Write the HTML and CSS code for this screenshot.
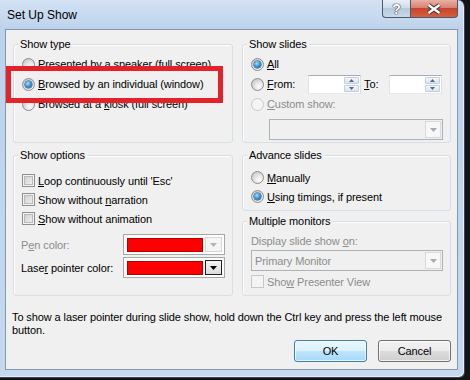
FILE: index.html
```html
<!DOCTYPE html>
<html lang="en">
<head>
    <meta charset="UTF-8">
    <title>Set Up Show</title>
    <link rel="stylesheet" href="styles.css">
</head>
<body>
    <div class="window">
        <div class="titlebar">
            <span class="title">Set Up Show</span>
            <div class="caption-buttons">
                <span class="cap-btn help">?</span>
                <span class="cap-btn close">
                    <svg width="14" height="12" viewBox="0 0 14 12"><path d="M1.5 2L12.5 10M12.5 2L1.5 10" stroke="#3b3b3b" stroke-width="4.4"/><path d="M1.5 2L12.5 10M12.5 2L1.5 10" stroke="#fff" stroke-width="2.2"/></svg>
                </span>
            </div>
        </div>

        <div class="client">
            <div class="panels">
                <div class="group">
                    <div class="legend">Show type</div>
                    <div class="opt"><span class="radio"></span><span><u>P</u>resented by a speaker (full screen)</span></div>
                    <div class="opt"><span class="radio on"></span><span><u>B</u>rowsed by an individual (window)</span></div>
                    <div class="opt"><span class="radio"></span><span>Browsed at a <u>k</u>iosk (full screen)</span></div>
                </div>

                <div class="group">
                    <div class="legend">Show slides</div>
                    <div class="opt"><span class="radio on"></span><span><u>A</u>ll</span></div>
                    <div class="opt">
                        <span class="radio"></span>
                        <span class="lbl-from"><u>F</u>rom:</span>
                        <span class="spin">
                            <span class="spin-btns">
                                <span><svg width="5" height="3" viewBox="0 0 5 3"><path d="M0 3h5L2.5 0z" fill="#4d6a96"/></svg></span>
                                <span><svg width="5" height="3" viewBox="0 0 5 3"><path d="M0 0h5L2.5 3z" fill="#4d6a96"/></svg></span>
                            </span>
                        </span>
                        <span class="lbl-to"><u>T</u>o:</span>
                        <span class="spin">
                            <span class="spin-btns">
                                <span><svg width="5" height="3" viewBox="0 0 5 3"><path d="M0 3h5L2.5 0z" fill="#4d6a96"/></svg></span>
                                <span><svg width="5" height="3" viewBox="0 0 5 3"><path d="M0 0h5L2.5 3z" fill="#4d6a96"/></svg></span>
                            </span>
                        </span>
                    </div>
                    <div class="opt dis"><span class="radio off"></span><span><u>C</u>ustom show:</span></div>
                    <div class="combo custom">
                        <span class="combo-value"></span>
                        <span class="combo-arrow"><svg width="7" height="4" viewBox="0 0 7 4"><path d="M0 0h7L3.5 4z" fill="#a9a9a9"/></svg></span>
                    </div>
                </div>

                <div class="group options">
                    <div class="legend">Show options</div>
                    <div class="opt"><span class="check"></span><span><u>L</u>oop continuously until 'Esc'</span></div>
                    <div class="opt"><span class="check"></span><span>Show without <u>n</u>arration</span></div>
                    <div class="opt"><span class="check"></span><span><u>S</u>how without animation</span></div>
                    <div class="colorrow first">
                        <span class="field-label dis">P<u>e</u>n color:</span>
                        <span class="colorbox">
                            <span class="swatch"></span>
                            <span class="drop"><svg width="7" height="4" viewBox="0 0 7 4"><path d="M0 0h7L3.5 4z" fill="#b4b4b4"/></svg></span>
                        </span>
                    </div>
                    <div class="colorrow">
                        <span class="field-label">Lase<u>r</u> pointer color:</span>
                        <span class="colorbox">
                            <span class="swatch"></span>
                            <span class="drop active"><svg width="7" height="4" viewBox="0 0 7 4"><path d="M0 0h7L3.5 4z" fill="#000"/></svg></span>
                        </span>
                    </div>
                </div>

                <div class="stack">
                    <div class="group advance">
                        <div class="legend">Advance slides</div>
                        <div class="opt"><span class="radio"></span><span><u>M</u>anually</span></div>
                        <div class="opt"><span class="radio on"></span><span><u>U</u>sing timings, if present</span></div>
                    </div>
                    <div class="group monitors">
                        <div class="legend">Multiple monitors</div>
                        <div class="caption dis">Display slide show <u>o</u>n:</div>
                        <div class="combo">
                            <span class="combo-value">Primary Monitor</span>
                            <span class="combo-arrow"><svg width="7" height="4" viewBox="0 0 7 4"><path d="M0 0h7L3.5 4z" fill="#a9a9a9"/></svg></span>
                        </div>
                        <div class="opt dis"><span class="check off"></span><span>Sho<u>w</u> Presenter View</span></div>
                    </div>
                </div>
            </div>

            <p class="hint">To show a laser pointer during slide show, hold down the Ctrl key and press the left mouse<br>button.</p>

            <div class="actions">
                <button class="btn default">OK</button>
                <button class="btn">Cancel</button>
            </div>
        </div>

        <div class="highlight"></div>
    </div>
</body>
</html>
```

FILE: styles.css
```css
body {
    margin: 0;
    background: #141414;
    font-family: "Liberation Sans", Arial, sans-serif;
    font-size: 11px;
    letter-spacing: -0.1px;
    color: #000;
}
.window {
    position: relative;
    width: 465px;
    height: 378px;
    box-sizing: border-box;
    display: flex;
    flex-direction: column;
    background: linear-gradient(#d3e2f4, #bdd2eb 30px, #c5d8ee);
    border-right: 1px solid #3a4656;
    border-bottom: 1px solid #3a4656;
    border-radius: 0 7px 6px 0;
    box-shadow: inset -1px -1px 0 #e4eef9;
}
.titlebar {
    flex: none;
    height: 29px;
    display: flex;
    align-items: flex-start;
}
.title {
    font-size: 12px;
    line-height: 14px;
    letter-spacing: 0;
    padding: 8px 0 0 7px;
}
.caption-buttons {
    margin-left: auto;
    margin-right: 6px;
    display: flex;
}
.cap-btn {
    height: 18px;
    box-sizing: border-box;
    border: 1px solid #4b5869;
    border-top: 0;
    display: flex;
    align-items: center;
    justify-content: center;
}
.help {
    width: 28px;
    border-right: 0;
    border-radius: 0 0 0 4px;
    background: linear-gradient(#e9eff7, #d0dcea 45%, #b6c8dd 50%, #cad9ea);
    color: #fff;
    font: bold 14px "Liberation Sans", sans-serif;
    text-shadow: 0 0 1px #3a3a3a, 0 0 1px #3a3a3a, 0 0 1px #3a3a3a;
}
.close {
    width: 48px;
    border-radius: 0 0 4px 0;
    background: linear-gradient(#eab0a5, #d98372 45%, #c7452e 50%, #d6603f);
}
.client {
    flex: 1;
    margin: 0 6px 7px 5px;
    border: 1px solid #8597ad;
    background: #f0f0f0;
    padding: 14px 6px 0 7px;
    display: flex;
    flex-direction: column;
}
.panels {
    display: grid;
    grid-template-columns: 220px 209px;
    grid-template-rows: 99px 141px;
    column-gap: 9px;
    row-gap: 12px;
}
.stack {
    display: flex;
    flex-direction: column;
    gap: 10px;
}
.group {
    box-sizing: border-box;
    border: 1px solid #d5dfe5;
    border-radius: 3px;
    box-shadow: inset 1px 1px 0 #fff;
    padding: 0 7px 0 8px;
}
.advance {
    height: 56px;
}
.monitors {
    flex: 1;
}
.legend {
    width: max-content;
    margin: -8px 0 3px -4px;
    padding: 0 2px;
    background: #f0f0f0;
    line-height: 14px;
}
.options .legend {
    margin-bottom: 9px;
}
.advance .legend,
.monitors .legend {
    margin-bottom: 6px;
}
.opt {
    display: flex;
    align-items: center;
    height: 20px;
    white-space: nowrap;
}
.options .opt,
.advance .opt,
.monitors .opt {
    height: 19px;
}
.dis {
    color: #8c8c8c;
}
.radio {
    flex: none;
    position: relative;
    width: 13px;
    height: 13px;
    box-sizing: border-box;
    margin-right: 3px;
    border: 1px solid #8d8d8d;
    border-radius: 50%;
    background: radial-gradient(circle at 65% 70%, #fdfdfd, #e6e6e6 40%, #c6c6c6 85%);
}
.radio.on::after {
    content: "";
    position: absolute;
    left: 2px;
    top: 2px;
    width: 7px;
    height: 7px;
    border-radius: 50%;
    background: radial-gradient(circle at 40% 35%, #a5e1fa, #2a8bd3 55%, #0e4d86);
    box-shadow: 0 0 0 0.5px #17466f;
}
.radio.off {
    border-color: #c8c8c8;
    background: #f4f4f4;
}
.check {
    flex: none;
    width: 13px;
    height: 13px;
    box-sizing: border-box;
    margin-right: 3px;
    border: 1px solid #8e8f8f;
    background: linear-gradient(135deg, #c9c9c9, #f6f6f6);
    box-shadow: inset 0 0 0 1px #f4f4f4, inset 0 0 0 2px #b9b9b9;
}
.check.off {
    border-color: #c8c8c8;
    background: #f4f4f4;
    box-shadow: none;
}
.lbl-from {
    width: 41px;
}
.lbl-to {
    width: 25px;
    margin-left: 3px;
}
.spin {
    width: 53px;
    height: 19px;
    box-sizing: border-box;
    padding: 1px;
    border: 1px solid;
    border-color: #abadb3 #dbdfe6 #e3e9ef #e2e3ea;
    background: #fff;
    display: flex;
    justify-content: flex-end;
}
.spin-btns {
    width: 15px;
    display: flex;
    flex-direction: column;
    gap: 1px;
}
.spin-btns span {
    flex: 1;
    border: 1px solid #c3cfdf;
    border-radius: 1px;
    background: linear-gradient(#f4f7fb, #dae3ee);
    display: flex;
    align-items: center;
    justify-content: center;
}
.combo {
    height: 21px;
    box-sizing: border-box;
    border: 1px solid #adb2b5;
    background: #f0f0f0;
    display: flex;
    align-items: center;
    color: #8c8c8c;
}
.combo.custom {
    width: 174px;
    margin: 5px 0 0 18px;
}
.monitors .combo {
    margin-top: 1px;
    margin-bottom: 1px;
}
.combo-value {
    flex: 1;
    padding-left: 3px;
}
.combo-arrow {
    width: 16px;
    align-self: stretch;
    margin: 1px;
    box-sizing: border-box;
    border: 1px solid #d9d9d9;
    background: #f7f7f7;
    display: flex;
    align-items: center;
    justify-content: center;
}
.caption {
    line-height: 15px;
}
.colorrow {
    display: flex;
    align-items: center;
    height: 23px;
    white-space: nowrap;
}
.colorrow.first {
    margin-top: 5px;
}
.field-label {
    width: 102px;
    margin-left: -1px;
}
.colorbox {
    width: 102px;
    height: 21px;
    box-sizing: border-box;
    padding-left: 3px;
    border: 1px solid #a7a7a7;
    background: #fff;
    display: flex;
    align-items: center;
    gap: 2px;
}
.swatch {
    width: 76px;
    height: 14px;
    box-sizing: border-box;
    border: 1px solid #b50000;
    background: #ff0000;
}
.drop {
    width: 17px;
    height: 15px;
    box-sizing: border-box;
    border: 1px solid #d6d6d6;
    background: #f5f5f5;
    display: flex;
    align-items: center;
    justify-content: center;
}
.drop.active {
    border-color: #202020;
    background: linear-gradient(#f4f4f4, #dcdcdc);
}
.hint {
    margin: 15px 0 0 -1px;
    line-height: 13px;
    white-space: nowrap;
}
.actions {
    display: flex;
    justify-content: flex-end;
    gap: 11px;
    margin-top: 3px;
}
.btn {
    width: 73px;
    height: 22px;
    padding: 0;
    border: 1px solid #707070;
    border-radius: 3px;
    background: linear-gradient(#f2f2f2, #ebebeb 50%, #dddddd 50%, #cfcfcf);
    box-shadow: inset 0 0 0 1px rgba(255, 255, 255, 0.7);
    font: inherit;
    letter-spacing: inherit;
    color: #000;
}
.btn.default {
    border-color: #3c7fb1;
    background: linear-gradient(#eaf6fd, #d9f0fc 50%, #bee6fd 50%, #a7d9f5);
}
.highlight {
    position: absolute;
    left: 6px;
    top: 66px;
    width: 217px;
    height: 37px;
    box-sizing: border-box;
    border: 5px solid #e5222a;
}
```
